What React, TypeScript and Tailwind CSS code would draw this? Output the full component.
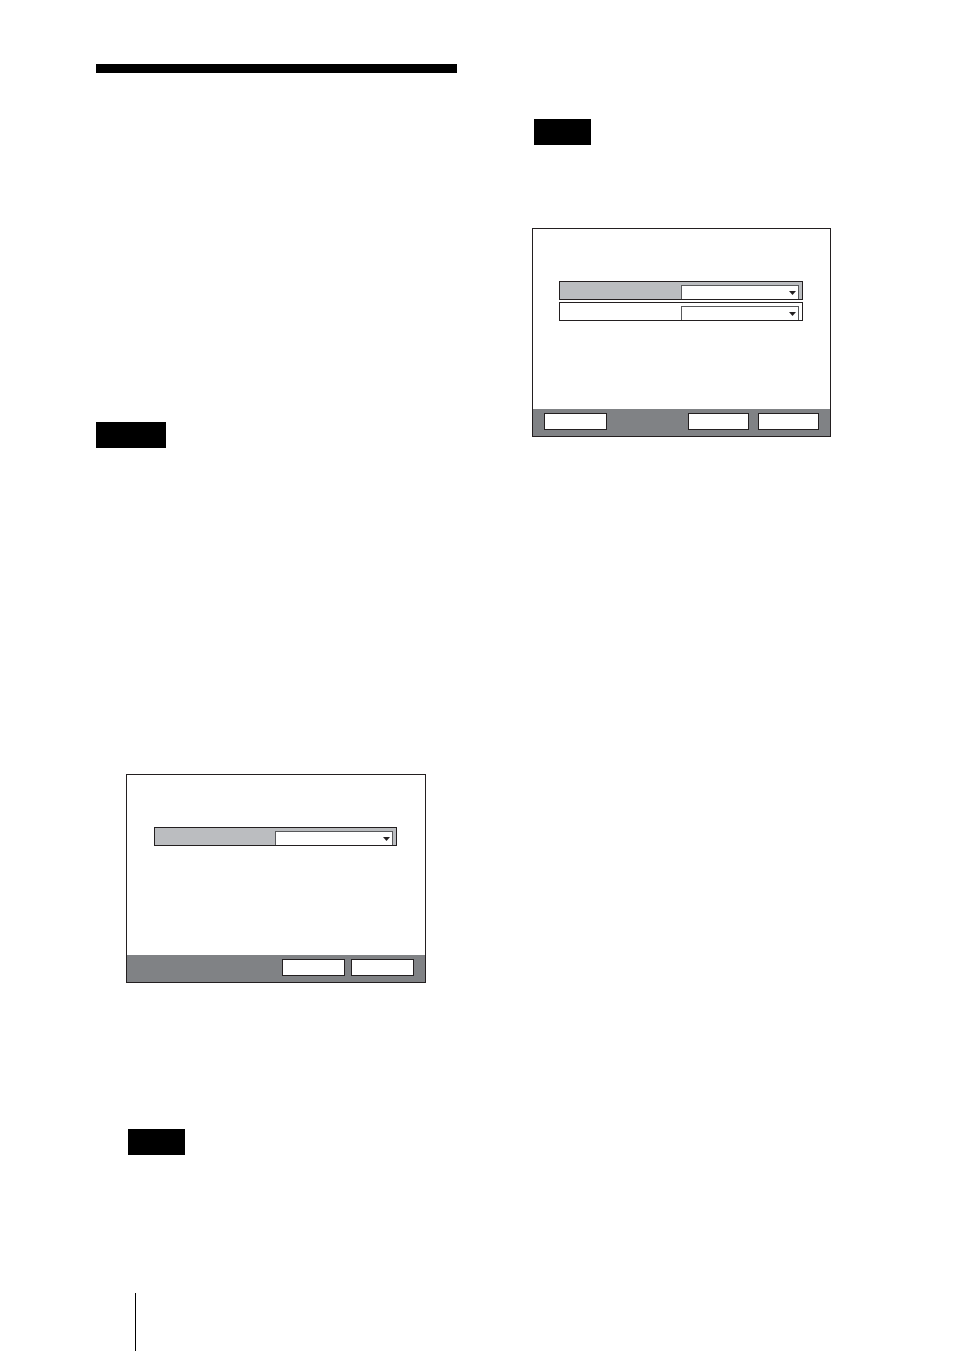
import clsx from 'clsx';

type RowProps = { label: string; selected?: boolean };

function SettingRow({ label, selected }: RowProps) {
  return (
    <div className={clsx('flex h-[19px] justify-end border border-[#231f20] pt-[3px] pr-[3px]', selected ? 'bg-[#bbbdc0]' : 'bg-white')}>
      <div className="relative w-[118px]">
        <select aria-label={label} className="block h-full w-full appearance-none rounded-none border border-b-0 border-[#58595b] bg-white outline-none">
          <option value=""></option>
        </select>
        {/* arrow lies over the select */}
        <svg viewBox="0 0 7 4" className="pointer-events-none absolute top-[6px] right-[3px] h-1 w-[7px]" aria-hidden="true">
          <path d="M0 0h7L3.5 4z" fill="#231f20" />
        </svg>
      </div>
    </div>
  );
}

function DialogButton({ label, className }: { label: string; className: string }) {
  return <button type="button" aria-label={label} className={clsx('h-[17px] border border-[#231f20] bg-white', className)} />;
}

type DialogProps = {
  rows: RowProps[];
  className: string;
  bodyClassName: string;
  children: React.ReactNode;
};

function Dialog({ rows, className, bodyClassName, children }: DialogProps) {
  return (
    <section className={clsx('flex h-[209px] max-w-full flex-col border border-[#231f20] bg-white', className)}>
      <div className={clsx('flex flex-1 flex-col gap-[2px] pt-[52px]', bodyClassName)}>
        {rows.map(row => <SettingRow key={row.label} {...row} />)}
      </div>
      <div className="flex h-[27px] bg-[#808285] px-[11px] pt-1">{children}</div>
    </section>
  );
}

export default function App() {
  return (
    <div className="min-h-screen bg-white pt-16 pr-[61px] pl-24 font-['Liberation_Sans',sans-serif]">
      <main className="grid grid-cols-2 gap-[75px]">
        <div>
          <hr className="h-[9px] border-0 bg-black" />
          <div className="mt-[349px] h-[26px] w-[70px] bg-black" />
          <Dialog
            rows={[{ label: 'Setting', selected: true }]}
            className="mt-[326px] ml-[30px] w-[300px]"
            bodyClassName="pr-[28px] pl-[27px]"
          >
            <div className="ml-auto flex gap-[6px]">
              <DialogButton label="Next" className="w-[63px]" />
              <DialogButton label="Cancel" className="w-[63px]" />
            </div>
          </Dialog>
          <div className="mt-[146px] ml-8 h-[26px] w-[57px] bg-black" />
        </div>

        <div className="pt-[55px]">
          <div className="ml-[2px] h-[26px] w-[57px] bg-black" />
          <Dialog
            rows={[{ label: 'First setting', selected: true }, { label: 'Second setting' }]}
            className="mt-[83px] w-[299px]"
            bodyClassName="pr-[27px] pl-[26px]"
          >
            <DialogButton label="Back" className="w-[63px]" />
            <div className="ml-auto flex gap-[9px]">
              <DialogButton label="Next" className="w-[61px]" />
              <DialogButton label="Cancel" className="w-[61px]" />
            </div>
          </Dialog>
        </div>
      </main>
      <footer className="mt-[138px] ml-[39px] h-[58px] border-l border-black" />
    </div>
  );
}
